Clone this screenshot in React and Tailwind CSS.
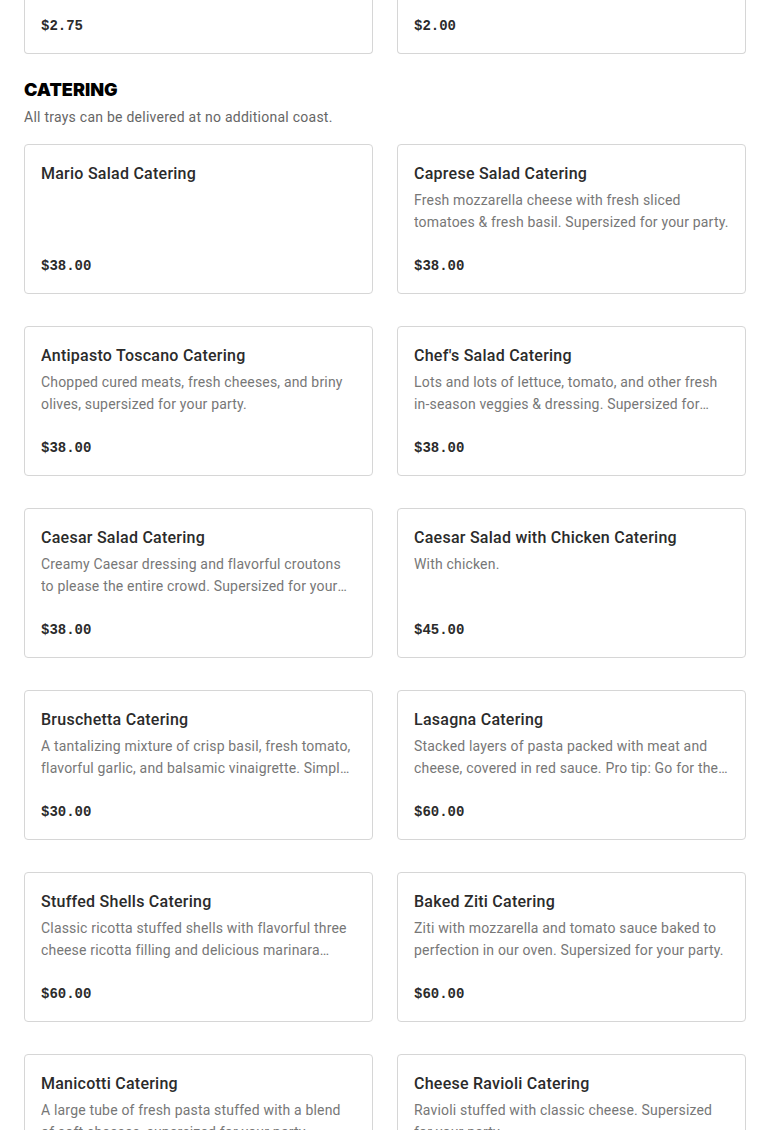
import React from "react";

const items = [
  { name: "Mario Salad Catering", desc: "", price: "$38.00" },
  {
    name: "Caprese Salad Catering",
    desc: "Fresh mozzarella cheese with fresh sliced tomatoes & fresh basil. Supersized for your party.",
    price: "$38.00",
  },
  {
    name: "Antipasto Toscano Catering",
    desc: "Chopped cured meats, fresh cheeses, and briny olives, supersized for your party.",
    price: "$38.00",
  },
  {
    name: "Chef's Salad Catering",
    desc: "Lots and lots of lettuce, tomato, and other fresh in-season veggies & dressing. Supersized for your party.",
    price: "$38.00",
  },
  {
    name: "Caesar Salad Catering",
    desc: "Creamy Caesar dressing and flavorful croutons to please the entire crowd. Supersized for your party.",
    price: "$38.00",
  },
  { name: "Caesar Salad with Chicken Catering", desc: "With chicken.", price: "$45.00" },
  {
    name: "Bruschetta Catering",
    desc: "A tantalizing mixture of crisp basil, fresh tomato, flavorful garlic, and balsamic vinaigrette. Simply delicious, supersized for your party.",
    price: "$30.00",
  },
  {
    name: "Lasagna Catering",
    desc: "Stacked layers of pasta packed with meat and cheese, covered in red sauce. Pro tip: Go for the full tray.",
    price: "$60.00",
  },
  {
    name: "Stuffed Shells Catering",
    desc: "Classic ricotta stuffed shells with flavorful three cheese ricotta filling and delicious marinara sauce. Supersized for your party.",
    price: "$60.00",
  },
  {
    name: "Baked Ziti Catering",
    desc: "Ziti with mozzarella and tomato sauce baked to perfection in our oven. Supersized for your party.",
    price: "$60.00",
  },
  {
    name: "Manicotti Catering",
    desc: "A large tube of fresh pasta stuffed with a blend of soft cheeses, supersized for your party.",
    price: "$60.00",
  },
  {
    name: "Cheese Ravioli Catering",
    desc: "Ravioli stuffed with classic cheese. Supersized for your party.",
    price: "$60.00",
  },
];

const body = { fontFamily: "Roboto, 'Noto Sans', sans-serif" };
const mono = { fontFamily: "'Liberation Mono', 'DejaVu Sans Mono', monospace" };

function Price({ children }) {
  return (
    <div className="text-[14px] leading-[22px] font-bold tracking-normal text-[#2b2b2b]" style={mono}>
      {children}
    </div>
  );
}

function Card({ item }) {
  return (
    <div className="h-[150px] flex flex-col border border-[#d6d6d6] rounded-[4px] bg-white px-4 pt-[17px] pb-4">
      <div className="text-[16px] leading-6 font-medium tracking-[0.25px] text-[#2b2b2b] truncate">{item.name}</div>
      {item.desc ? (
        <div className="mt-[3px] text-[14px] leading-[22px] tracking-[0.18px] text-[#777777] line-clamp-2">{item.desc}</div>
      ) : null}
      <div className="mt-auto">
        <Price>{item.price}</Price>
      </div>
    </div>
  );
}

export default function App() {
  return (
    <div className="bg-white min-h-screen px-6" style={body}>
      <div className="grid grid-cols-2 gap-6">
        <div className="h-[54px] flex flex-col justify-end border border-t-0 border-[#d6d6d6] rounded-b-[4px] px-4 pb-4">
          <Price>$2.75</Price>
        </div>
        <div className="h-[54px] flex flex-col justify-end border border-t-0 border-[#d6d6d6] rounded-b-[4px] px-4 pb-4">
          <Price>$2.00</Price>
        </div>
      </div>
      <h2
        className="mt-[22px] text-[18px] leading-7 font-black text-black"
        style={{ fontFamily: "Inter, 'Noto Sans', sans-serif" }}
      >
        CATERING
      </h2>
      <p className="mt-[2px] text-[14px] leading-[22px] tracking-[0.25px] text-[#666666]">
        All trays can be delivered at no additional coast.
      </p>
      <div className="mt-4 grid grid-cols-2 gap-x-6 gap-y-8 pb-8">
        {items.map((it) => (
          <Card key={it.name} item={it} />
        ))}
      </div>
    </div>
  );
}
